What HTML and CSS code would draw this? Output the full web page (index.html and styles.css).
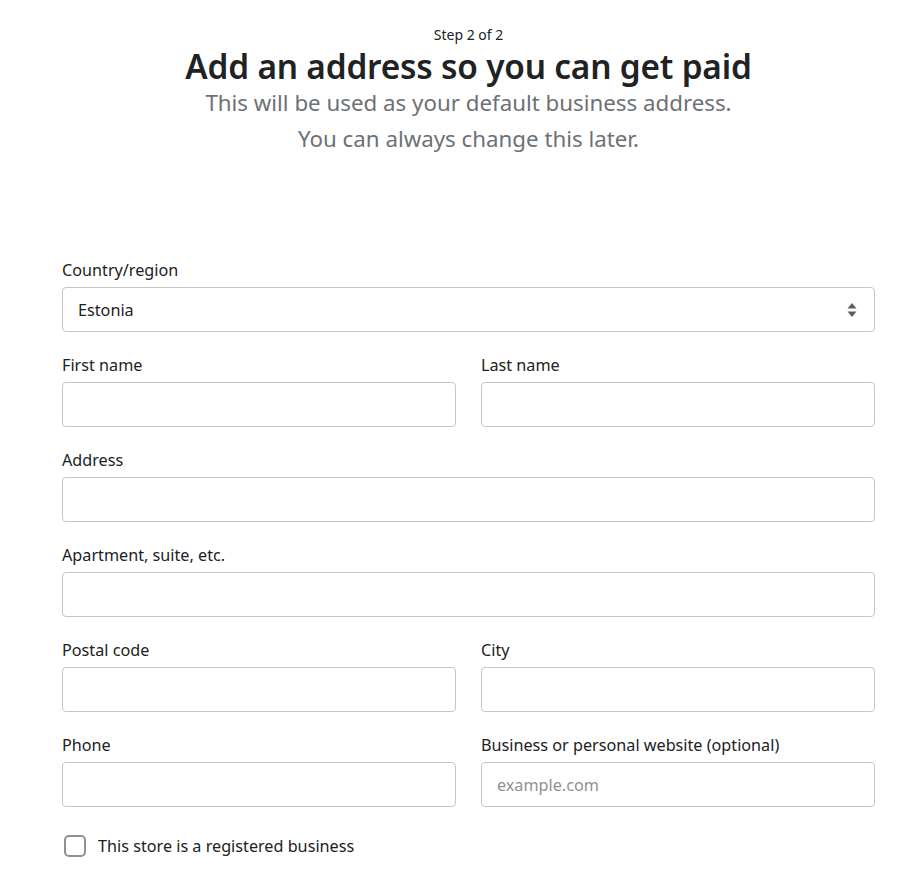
FILE: index.html
```html
<!DOCTYPE html>
<html lang="en">
<head>
<meta charset="utf-8">
<title>Add an address</title>
<link rel="stylesheet" href="styles.css">
</head>
<body>
<main class="page">
  <header class="intro">
    <p class="step">Step 2 of 2</p>
    <h1 class="title">Add an address so you can get paid</h1>
    <p class="subtitle">This will be used as your default business address.<br>You can always change this later.</p>
  </header>
  <form class="form">
    <div class="field">
      <label class="label">Country/region</label>
      <div class="select">
        <span class="select-value">Estonia</span>
        <svg class="select-arrows" width="10" height="14" viewBox="0 0 10 14"><path d="M5 0 L9.5 5.5 H0.5 Z M5 14 L0.5 8.5 H9.5 Z" fill="#5c5f62"/></svg>
      </div>
    </div>
    <div class="row">
      <div class="field">
        <label class="label">First name</label>
        <div class="input"></div>
      </div>
      <div class="field">
        <label class="label">Last name</label>
        <div class="input"></div>
      </div>
    </div>
    <div class="field">
      <label class="label">Address</label>
      <div class="input"></div>
    </div>
    <div class="field">
      <label class="label">Apartment, suite, etc.</label>
      <div class="input"></div>
    </div>
    <div class="row">
      <div class="field">
        <label class="label">Postal code</label>
        <div class="input"></div>
      </div>
      <div class="field">
        <label class="label">City</label>
        <div class="input"></div>
      </div>
    </div>
    <div class="row">
      <div class="field">
        <label class="label">Phone</label>
        <div class="input"></div>
      </div>
      <div class="field">
        <label class="label">Business or personal website (optional)</label>
        <div class="input"><span class="placeholder">example.com</span></div>
      </div>
    </div>
    <div class="check">
      <span class="box"></span>
      <span class="check-label">This store is a registered business</span>
    </div>
  </form>
</main>
</body>
</html>
```

FILE: styles.css
```css
* { box-sizing: border-box; }
html, body { margin: 0; padding: 0; background: #ffffff; }
body {
  font-family: "Noto Sans", "Open Sans", sans-serif;
  color: #202223;
}
.page {
  width: 813px;
  margin-left: 62px;
}
.intro {
  text-align: center;
  padding-top: 26px;
}
.step {
  margin: 0;
  font-size: 14px;
  line-height: 18px;
  color: #202223;
}
.title {
  margin: 3px 0 0;
  font-size: 33.4px;
  line-height: 38px;
  font-weight: 600;
  color: #202223;
  letter-spacing: -0.2px;
}
.subtitle {
  margin: 0;
  font-size: 22.3px;
  line-height: 36px;
  color: #6d7175;
}
.form {
  margin-top: 101px;
  display: flex;
  flex-direction: column;
  gap: 21px;
}
.row {
  display: grid;
  grid-template-columns: 1fr 1fr;
  gap: 25px;
}
.field {
  display: flex;
  flex-direction: column;
  gap: 5px;
}
.label {
  font-size: 16.2px;
  line-height: 24px;
  color: #202223;
}
.input, .select {
  height: 45px;
  border: 1px solid #c4c6c8;
  border-radius: 4px;
  background: #fff;
  display: flex;
  align-items: center;
  padding: 0 15px;
  font-size: 16.2px;
}
.select { justify-content: space-between; padding-right: 17px; }
.select-value { color: #202223; }
.placeholder { color: #8c9196; }
.check {
  margin-top: 6px;
  display: flex;
  align-items: center;
  gap: 12px;
  padding-left: 2px;
}
.box {
  width: 22px;
  height: 22px;
  border: 2px solid #8c9196;
  border-radius: 5px;
}
.check-label {
  font-size: 16.2px;
  line-height: 24px;
  color: #202223;
}
```
